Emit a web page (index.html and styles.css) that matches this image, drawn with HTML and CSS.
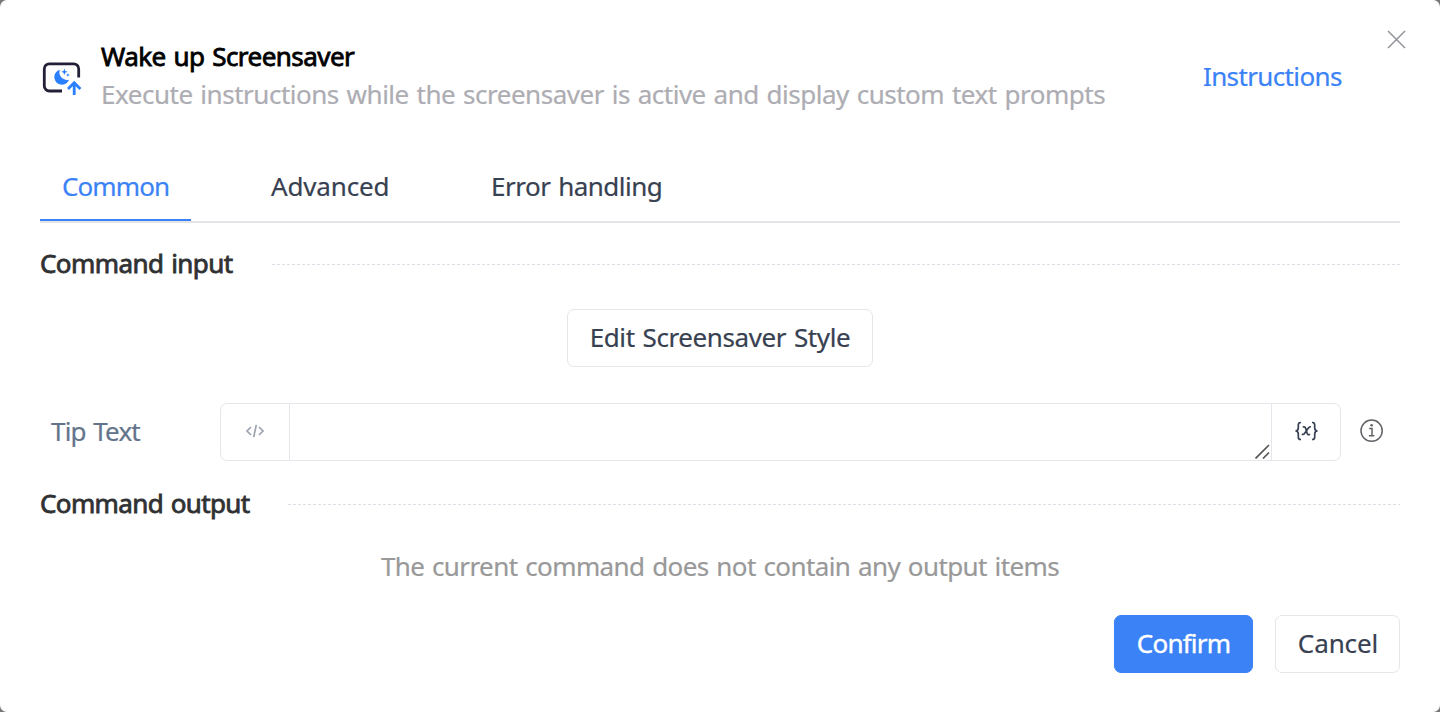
FILE: index.html
```html
<!DOCTYPE html>
<html lang="en">
<head>
<meta charset="utf-8">
<title>Wake up Screensaver</title>
<link rel="stylesheet" href="styles.css">
</head>
<body>
<main class="dialog">
  <header class="header">
    <svg class="logo" width="40" height="36" viewBox="0 0 40 36" fill="none">
      <path d="M20 31H7.500A5 5 0 0 1 2.300 25.800V9A5 5 0 0 1 7.500 3.800h24A5 5 0 0 1 36.700 9v8.500" stroke="#231f36" stroke-width="2.800"/>
      <path d="M17.800 9.800A7.600 7.600 0 1 0 27 19.800C21.500 21 15.800 16 17.800 9.800Z" fill="#2b80ff"/>
      <path d="M22.400 8.600l.9 2.300 2.300.9-2.300.9-.9 2.300-.9-2.300-2.300-.9 2.300-.9ZM25.900 13l.6 1.400 1.400.6-1.400.6-.6 1.400-.6-1.400-1.400-.6 1.400-.6Z" fill="#2b80ff"/>
      <path d="M32.200 35V23M26 29 32.200 22.800l6.200 6.200" stroke="#2b80ff" stroke-width="2.800"/>
    </svg>
    <div class="heading">
      <h1 class="title">Wake up Screensaver</h1>
      <p class="description">Execute instructions while the screensaver is active and display custom text prompts</p>
    </div>
    <a class="instructions">Instructions</a>
    <svg class="close" width="20" height="20" viewBox="0 0 20 20" fill="none" stroke="#909399" stroke-width="1.500"><path d="M1 1 18 18M18 1 1 18"/></svg>
  </header>
  <nav class="tabs">
    <a class="tab tab-active">Common</a>
    <a class="tab tab-advanced">Advanced</a>
    <a class="tab tab-error">Error handling</a>
  </nav>
  <section class="input-section">
    <div class="section-head"><h2 class="section-title section-title-input">Command input</h2><svg class="rule" height="1"><line x1="0" y1=".5" x2="100%" y2=".5"/></svg></div>
    <button class="button style-button">Edit Screensaver Style</button>
    <div class="field">
      <label class="label">Tip Text</label>
      <div class="control">
        <div class="prefix"><svg width="20" height="16" viewBox="0 0 20 16" fill="none" stroke="#9ca3af" stroke-width="1.700"><path d="M6 4 2 8l4 4M14 4l4 4-4 4M11.300 1.800 8.700 14.200"/></svg></div>
        <div class="textarea"><svg width="15" height="15" viewBox="0 0 15 15" fill="none" stroke="#555" stroke-width="1.700"><path d="M.5 14.500 14 1M8 14.500l6-6"/></svg></div>
        <div class="suffix">
          <svg width="24" height="20" viewBox="0 0 24 20" fill="none" stroke="#374151" stroke-width="1.700"><path d="M7 1.500h-.5Q4.300 1.500 4.300 4v3Q4.300 9.800 1.500 10q2.800.2 2.800 3v3q0 2.500 2.200 2.500H7M18 1.500h.5q2.200 0 2.200 2.500v3q0 2.800 2.800 3-2.800.2-2.800 3v3q0 2.500-2.200 2.500H18M8.700 6q2.200-.8 2.900 1l1.600 5.500q.7 2 2.800.7M16.800 6q-1.400-.5-2.400 1l-3.900 5.500q-1.100 1.400-2.700.7"/></svg>
        </div>
      </div>
      <svg class="info" width="24" height="24" viewBox="0 0 24 24" fill="none" stroke="#606266" stroke-width="1.500"><circle cx="11.600" cy="11.700" r="10.600"/><path d="M9.200 9.400h2.800v7.300M8.900 16.700h5.500"/><circle cx="11.600" cy="6.300" r="1.300" fill="#606266" stroke="none"/></svg>
    </div>
  </section>
  <section>
    <div class="section-head"><h2 class="section-title section-title-output">Command output</h2><svg class="rule" height="1"><line x1="0" y1=".5" x2="100%" y2=".5"/></svg></div>
    <p class="empty">The current command does not contain any output items</p>
  </section>
  <footer class="footer">
    <button class="button confirm">Confirm</button>
    <button class="button cancel">Cancel</button>
  </footer>
</main>
</body>
</html>
```
FILE: styles.css
```css
* { box-sizing: border-box; }
body { margin: 0; background: #777; font-family: "Noto Sans", sans-serif; font-size: 26px; line-height: 38px; word-spacing: 1.5px; -webkit-text-stroke-width: .2px; }
h1, h2, p { margin: 0; font-size: inherit; font-weight: 400; white-space: nowrap; }
.dialog { width: 1440px; height: 712px; padding: 0 40px; background: #fff; border-radius: 7px; overflow: hidden; }
.header { display: flex; height: 154px; padding-top: 37px; }
.logo { flex: none; margin: 23px 0 0 2px; }
.heading { width: 1102px; margin-left: 19px; flex: none; }
.title { color: #000; letter-spacing: -.53px; -webkit-text-stroke-width: .8px; }
.description { color: #adadb3; letter-spacing: -.482px; }
.instructions { width: 150px; margin-top: 20px; color: #3b82f6; letter-spacing: -.63px; }
.close { flex: none; margin: -7px -7px 0 37px; }
.tabs { display: flex; height: 69px; border-bottom: 2px solid #e4e5e9; white-space: nowrap; }
.tab { padding-top: 13px; color: #374151; }
.tab-active { width: 151px; height: 67px; padding-left: 22px; color: #3b82f6; border-bottom: 2px solid #3b82f6; letter-spacing: -.9px; }
.tab-advanced { width: 220px; margin-left: 80px; letter-spacing: -.15px; }
.tab-error { letter-spacing: -.5px; }
.section-head { display: flex; align-items: center; height: 38px; }
.input-section { height: 262px; padding-top: 22px; }
.section-title { flex: none; height: 40px; color: #303133; -webkit-text-stroke-width: .8px; }
.section-title-input { width: 230px; letter-spacing: -.57px; }
.section-title-output { width: 246px; letter-spacing: -.63px; }
.rule { flex: 1; min-width: 0; stroke: #dcdfe6; stroke-dasharray: 3 2; stroke-dashoffset: 3; }
.button { display: flex; align-items: center; justify-content: center; height: 58px; padding: 0 0 2px; border: 1px solid #e4e6e9; border-radius: 7px; background: #fff; color: #374151; font: inherit; word-spacing: inherit; white-space: nowrap; }
.style-button { width: 306px; margin: 26px auto 36px; letter-spacing: -.4px; }
.field { display: flex; align-items: center; height: 58px; }
.label { width: 180px; padding: 0 0 3px 11px; color: #64748b; white-space: nowrap; letter-spacing: -.8px; }
.control { display: flex; width: 1121px; height: 58px; border: 1px solid #e4e6eb; border-radius: 7px; }
.prefix, .suffix { display: flex; width: 69px; align-items: center; justify-content: center; padding-bottom: 2px; }
.prefix { border-right: 1px solid #e4e6eb; }
.suffix { border-left: 1px solid #e4e6eb; }
.textarea { display: flex; flex: 1; align-items: flex-end; justify-content: flex-end; padding: 1px; }
.info { margin: 0 0 2px 19px; }
.empty { margin-top: 24px; color: #999; text-align: center; letter-spacing: -.59px; }
.footer { display: flex; justify-content: flex-end; gap: 22px; margin-top: 30px; }
.confirm { width: 139px; background: #3b82f6; border-color: #3b82f6; color: #fff; letter-spacing: -.8px; -webkit-text-stroke-width: .4px; }
.cancel { width: 125px; padding-left: 1px; letter-spacing: -.1px; }
```
